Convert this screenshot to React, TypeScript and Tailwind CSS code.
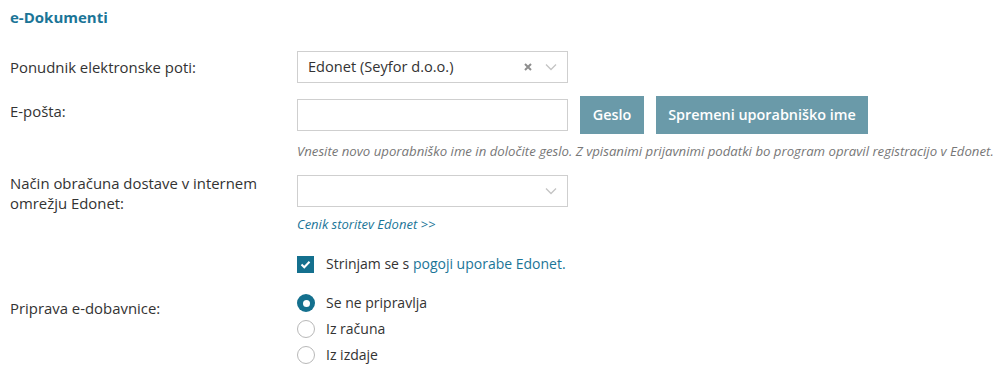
import React from "react";

const Chevron = () => (
  <svg width="12" height="8" viewBox="0 0 12 8" fill="none" stroke="#c4c4c4" strokeWidth="1.3">
    <path d="M1 1.5l5 5 5-5" />
  </svg>
);

const Radio = ({ checked, label }: { checked?: boolean; label: string }) => (
  <div className="flex items-center h-5">
    {checked ? (
      <span className="w-[18px] h-[18px] rounded-full bg-[#14708e] flex items-center justify-center">
        <span className="w-[7px] h-[7px] rounded-full bg-white" />
      </span>
    ) : (
      <span className="w-[18px] h-[18px] rounded-full border border-[#b8b8b8] bg-white" />
    )}
    <span className="ml-[11px] text-sm text-[#333]">{label}</span>
  </div>
);

export default function App() {
  return (
    <div className="w-[996px] h-[373px] bg-white font-['Open_Sans',sans-serif] text-[#333] pl-[10px] pt-[7px]">
      <h2 className="text-[15px] font-bold leading-5 text-[#1b7597]">e-Dokumenti</h2>

      {/* Ponudnik */}
      <div className="flex mt-6">
        <div className="w-[287px] h-8 flex items-center text-[14.9px]">Ponudnik elektronske poti:</div>
        <div className="w-[271px] h-8 border border-[#cfcfcf] flex items-center pl-[10px] pr-[10px]">
          <span className="text-[14.6px] flex-1">Edonet (Seyfor d.o.o.)</span>
          <svg width="8" height="8" viewBox="0 0 8 8" className="mr-[13px]" stroke="#8e8e8e" strokeWidth="2">
            <path d="M1 1l6 6M7 1L1 7" />
          </svg>
          <Chevron />
        </div>
      </div>

      {/* E-pošta */}
      <div className="flex mt-[13px]">
        <div className="w-[287px] pt-[5px] text-[14.9px] leading-5">E-pošta:</div>
        <div className="flex flex-col">
          <div className="flex items-center gap-3 h-[38px]">
            <input className="w-[271px] h-8 border border-[#cfcfcf] outline-none" />
            <button className="h-[38px] w-16 bg-[#6a9aa9] text-white text-[14.4px] font-semibold">Geslo</button>
            <button className="h-[38px] w-[212px] bg-[#6a9aa9] text-white text-[14.4px] font-semibold">
              Spremeni uporabniško ime
            </button>
          </div>
          <p className="mt-[9px] text-[13.2px] italic leading-4 text-[#777] whitespace-nowrap">
            Vnesite novo uporabniško ime in določite geslo. Z vpisanimi prijavnimi podatki bo program opravil registracijo v Edonet.
          </p>
        </div>
      </div>

      {/* Način obračuna */}
      <div className="flex mt-[14px]">
        <div className="w-[287px] text-[14.9px] leading-5">
          Način obračuna dostave v internem
          <br />
          omrežju Edonet:
        </div>
        <div className="flex flex-col pt-[2px]">
          <div className="w-[271px] h-8 border border-[#cfcfcf] flex items-center justify-end pr-[10px]">
            <Chevron />
          </div>
          <a className="mt-[9px] text-[13px] italic leading-4 text-[#1b7597]">Cenik storitev Edonet &gt;&gt;</a>
        </div>
      </div>

      {/* Checkbox */}
      <div className="flex items-center h-5 mt-[22px] ml-[287px]">
        <span className="w-[17px] h-[17px] bg-[#14708e] flex items-center justify-center">
          <svg width="11" height="9" viewBox="0 0 11 9" fill="none" stroke="white" strokeWidth="2">
            <path d="M1.5 4.5l2.8 2.8L9.5 1.8" />
          </svg>
        </span>
        <span className="ml-[12px] text-sm">
          Strinjam se s <a className="text-[#1b7597]">pogoji uporabe Edonet.</a>
        </span>
      </div>

      {/* Priprava */}
      <div className="flex mt-[19px]">
        <div className="w-[287px] pt-[5px] text-[14.9px] leading-5">Priprava e-dobavnice:</div>
        <div className="flex flex-col gap-[6px]">
          <Radio checked label="Se ne pripravlja" />
          <Radio label="Iz računa" />
          <Radio label="Iz izdaje" />
        </div>
      </div>
    </div>
  );
}
